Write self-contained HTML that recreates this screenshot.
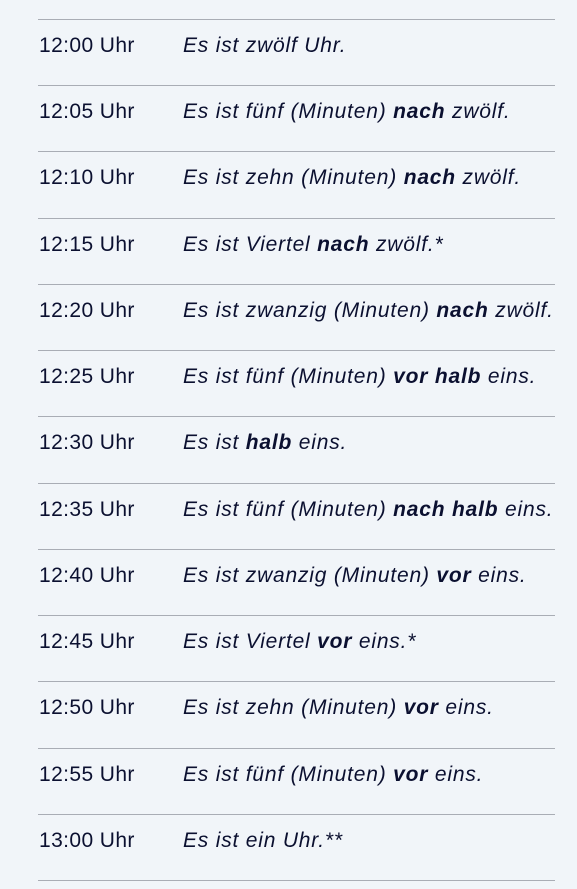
<!DOCTYPE html>
<html><head><meta charset="utf-8"><style>
html,body{margin:0;padding:0;background:#f1f5f9;width:577px;height:889px;overflow:hidden}
body{position:relative;font-family:"Liberation Sans",sans-serif;color:#0b1030;font-size:21px}
.l{position:absolute;left:38px;width:517px;height:1px;background:#a9adb5}
.t{position:absolute;left:39px;line-height:24px;white-space:nowrap;letter-spacing:0.4px}
.s{position:absolute;left:183px;line-height:24px;font-style:italic;white-space:nowrap;letter-spacing:0.8px}
b{font-weight:bold}
</style></head><body>
<div class="l" style="top:19px"></div>
<div class="t" style="top:34px">12:00 Uhr</div><div class="s" style="top:34px">Es ist zwölf Uhr.</div>
<div class="l" style="top:85px"></div>
<div class="t" style="top:100px">12:05 Uhr</div><div class="s" style="top:100px">Es ist fünf (Minuten) <b>nach</b> zwölf.</div>
<div class="l" style="top:151px"></div>
<div class="t" style="top:166px">12:10 Uhr</div><div class="s" style="top:166px">Es ist zehn (Minuten) <b>nach</b> zwölf.</div>
<div class="l" style="top:218px"></div>
<div class="t" style="top:233px">12:15 Uhr</div><div class="s" style="top:233px">Es ist Viertel <b>nach</b> zwölf.*</div>
<div class="l" style="top:284px"></div>
<div class="t" style="top:299px">12:20 Uhr</div><div class="s" style="top:299px">Es ist zwanzig (Minuten) <b>nach</b> zwölf.</div>
<div class="l" style="top:350px"></div>
<div class="t" style="top:365px">12:25 Uhr</div><div class="s" style="top:365px">Es ist fünf (Minuten) <b>vor halb</b> eins.</div>
<div class="l" style="top:416px"></div>
<div class="t" style="top:431px">12:30 Uhr</div><div class="s" style="top:431px">Es ist <b>halb</b> eins.</div>
<div class="l" style="top:483px"></div>
<div class="t" style="top:498px">12:35 Uhr</div><div class="s" style="top:498px">Es ist fünf (Minuten) <b>nach halb</b> eins.</div>
<div class="l" style="top:549px"></div>
<div class="t" style="top:564px">12:40 Uhr</div><div class="s" style="top:564px">Es ist zwanzig (Minuten) <b>vor</b> eins.</div>
<div class="l" style="top:615px"></div>
<div class="t" style="top:630px">12:45 Uhr</div><div class="s" style="top:630px">Es ist Viertel <b>vor</b> eins.*</div>
<div class="l" style="top:681px"></div>
<div class="t" style="top:696px">12:50 Uhr</div><div class="s" style="top:696px">Es ist zehn (Minuten) <b>vor</b> eins.</div>
<div class="l" style="top:748px"></div>
<div class="t" style="top:763px">12:55 Uhr</div><div class="s" style="top:763px">Es ist fünf (Minuten) <b>vor</b> eins.</div>
<div class="l" style="top:814px"></div>
<div class="t" style="top:829px">13:00 Uhr</div><div class="s" style="top:829px">Es ist ein Uhr.**</div>
<div class="l" style="top:880px"></div>
</body></html>
